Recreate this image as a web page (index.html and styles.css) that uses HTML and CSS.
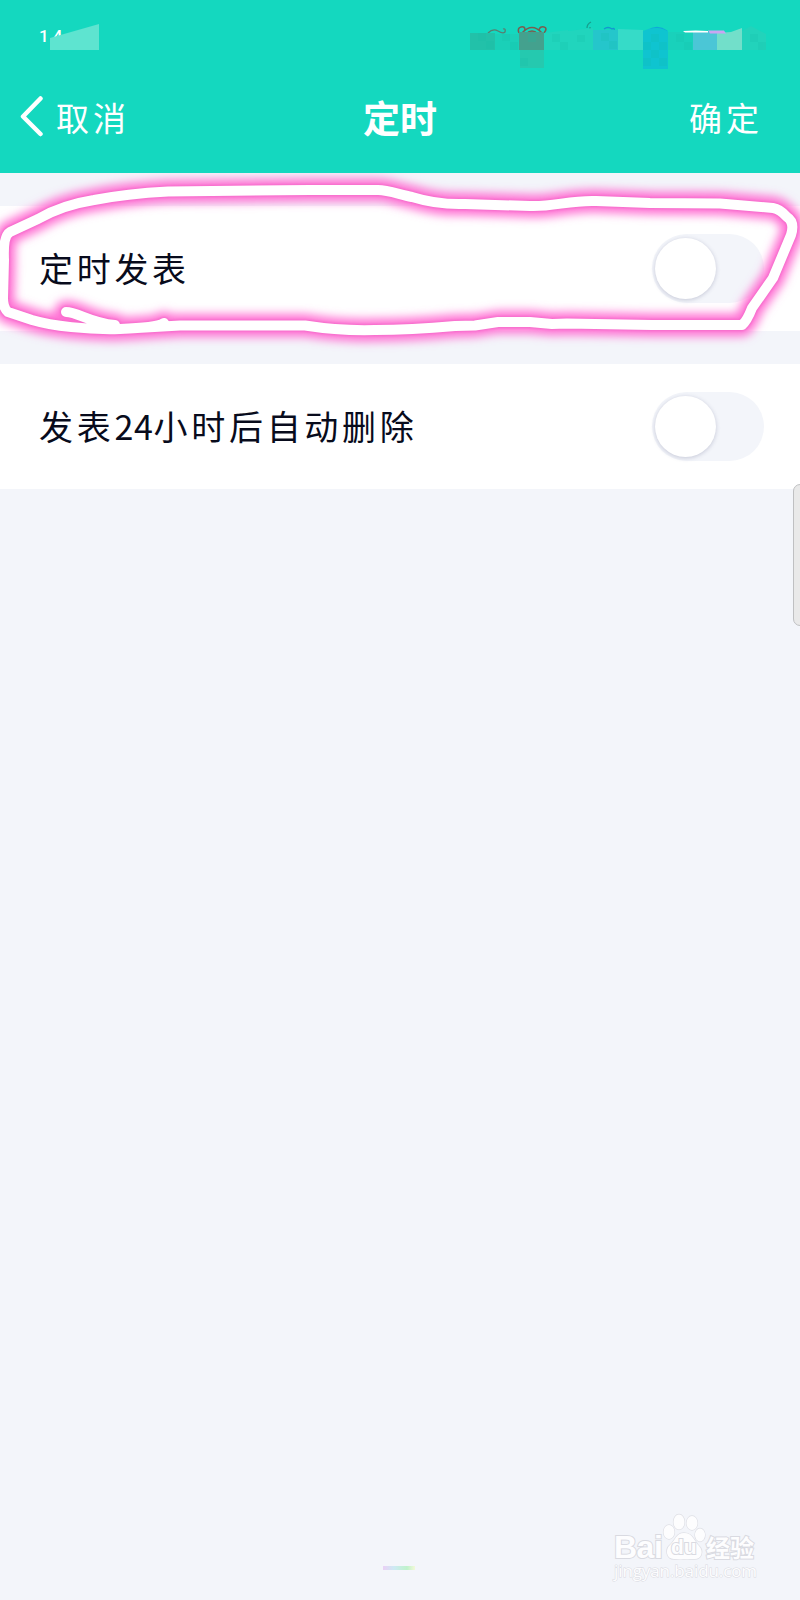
FILE: index.html
```html
<!DOCTYPE html>
<html lang="zh-CN">

<head>
  <meta charset="UTF-8" />
  <meta name="viewport" content="width=device-width, initial-scale=1" />
  <title>定时</title>
  <link rel="stylesheet" href="styles.css">
</head>

<body>

  <header class="header">
    <div class="status-bar">
      <span class="clock">14</span>
      <!-- Mosaic over the clock and the status icons -->
      <svg class="mosaic" width="800" height="74" viewBox="0 0 800 74">
        <path d="M50 38L99 24V50H50z" fill="#5ee4d0" />
        <g fill="none" stroke-width="1.3">
          <path d="M488 33q5-5 10-2t7 1q1-4-2-3" stroke="#587e70" />
          <g stroke="#785f50" stroke-width="1.6">
            <path d="M519 33q-2-5 2-6t4 3M539 30q1-4 5-3t0 6" />
            <path d="M522 33q10-11 20 0M526 34q6-6 12 0" />
          </g>
          <path d="M587 28q0-4 4-6M590 27v2" stroke="#179e8d" />
          <path d="M604 29q4-3 8 0q3-2 2 2" stroke="#1497cf" />
          <path d="M647 31q10-7 20 0" stroke="#0fa9d8" />
        </g>
        <path d="M470 33h25v17h-25z" fill="#22c1a9" />
        <path d="M495 34h24v16h-24z" fill="#1ad0b8" />
        <path d="M519 32h25v18h-25z" fill="#44a18e" />
        <path d="M520 50h24v18h-24z" fill="#25c9af" />
        <path d="M544 33l24-3v20h-24zM568 31l25-3v22h-25z" fill="#21d5bd" />
        <path d="M593 30h25v20h-25z" fill="#25c6cb" />
        <path d="M618 29l25 1v20h-25z" fill="#36dbc8" />
        <path d="M643 31q12-6 25 0v38h-25z" fill="#0fc4d0" />
        <path d="M668 32h25v18h-25z" fill="#19d1bb" />
        <path d="M693 32h24v18h-24z" fill="#4bc6d6" />
        <path d="M717 33l14-1 11-4v22h-25z" fill="#72dfca" />
        <path d="M742 31l9-5 15 8v16h-24z" fill="#22d3bb" />
        <g fill="#14bda7" opacity=".18">
          <path d="M478 33h8v8h-8zM486 41h8v8h-8zM502 34h8v7h-8zM510 42h8v8h-8zM552 34h8v8h-8zM560 42h8v8h-8zM577 35h8v7h-8zM601 33h8v8h-8zM609 41h8v8h-8zM676 34h8v8h-8zM684 42h8v8h-8zM750 34h8v8h-8zM758 42h8v8h-8z" />
          <path d="M651 34h8v8h-8zM643 42h8v8h-8zM659 42h8v8h-8zM651 50h8v8h-8zM643 58h8v8h-8zM659 58h8v8h-8zM528 34h8v8h-8zM520 58h8v8h-8z" />
        </g>
        <path d="M683 31q13-1 25 0v1.600h-23z" fill="#fff" />
        <path d="M708 30.500h16l2 3h-16z" fill="#c9a5f2" />
      </svg>
    </div>
    <nav class="nav-bar">
      <a class="back">
        <svg width="24" height="42" viewBox="0 0 24 42" fill="none" stroke="#fff" stroke-width="4.500" stroke-linecap="round" stroke-linejoin="round">
          <path d="M20.500 2.500L3 20.500L20.500 38" />
        </svg>
        <span>取消</span>
      </a>
      <h1>定时</h1>
      <a class="confirm">确定</a>
    </nav>
  </header>

  <main>
    <div class="row">
      <span class="label">定时发表</span>
      <span class="toggle"></span>
    </div>
    <div class="row">
      <span class="label">发表<span class="digits">24</span>小时后自动删除</span>
      <span class="toggle"></span>
    </div>
  </main>

  <!-- Hand drawn highlight around the first row -->
  <svg class="highlight" width="800" height="187" viewBox="0 173 800 187">
    <defs>
      <filter id="glow" filterUnits="userSpaceOnUse" x="-40" y="140" width="880" height="240">
        <feGaussianBlur stdDeviation="5" />
      </filter>
      <filter id="edge" filterUnits="userSpaceOnUse" x="-40" y="140" width="880" height="240">
        <feGaussianBlur stdDeviation="1" />
      </filter>
      <path id="loop" d="M66 312C78 312 90 323 115 325M164 323C158 327 145 328 120 329C88 330 52 326 32 320L8 312Q3 308 3 298L4 260Q3 236 10 232L38 219Q62 205 94 200C120 195 140 193 168 191.500L310 190H378C388 190 398 194 412 197Q438 205 465 204L530 206C553 207 570 200 596 201L650 203L720 203.500L773 208Q780 209 787 217Q795 222 791 235L773 278L752 308Q747 321 742 325H652L567 323.500L552 324L530 322H498L475 325.500L455 326Q410 330 375 330Q340 331 305 325.500H180L120 329" />
    </defs>
    <g fill="none" stroke-linecap="round" stroke-linejoin="round">
      <use href="#loop" stroke="#ff72d4" stroke-width="23" filter="url(#glow)" />
      <use href="#loop" stroke="#f56bcb" stroke-width="12" filter="url(#edge)" />
      <use href="#loop" stroke="#fff" stroke-width="10" />
    </g>
  </svg>

  <div class="side-handle"></div>
  <div class="home-line"></div>

  <div class="watermark">
    <div class="brand">
      <span class="bai">Bai</span>
      <span class="paw">
        <svg width="44" height="48" viewBox="0 0 44 48" fill="#fdfdfe" stroke="#dedfe5" stroke-width="1.300">
          <ellipse cx="7" cy="19" rx="5.500" ry="7" />
          <ellipse cx="17" cy="9" rx="5.500" ry="7.500" />
          <ellipse cx="30" cy="10" rx="5.500" ry="7" />
          <ellipse cx="38" cy="22" rx="5" ry="6.500" />
          <path d="M22 20C14 20 13 28 8 32C3 36 4 46 12 46C18 47 26 46 31 46C40 47 42 38 37 33C32 28 31 20 22 20z" />
        </svg>
        <span class="du">du</span>
      </span>
      <span class="jingyan">经验</span>
    </div>
    <div class="url">jingyan.baidu.com</div>
  </div>

</body>

</html>
```

FILE: styles.css
```css
* {
  margin: 0;
  padding: 0;
  box-sizing: border-box;
}

body {
  position: relative;
  height: 1600px;
  overflow: hidden;
  background-color: #f3f5fa;
  font-family: "Noto Sans CJK SC", sans-serif;
  color: #080b1c;
}

.header {
  height: 173px;
  background-color: #14d8bf;
  color: #fff;
}

.status-bar {
  position: relative;
  height: 74px;
  padding: 28px 0 0 39px;
}

.clock {
  display: block;
  font-family: Roboto, sans-serif;
  font-size: 17px;
  font-weight: 500;
  line-height: 17px;
  letter-spacing: 4px;
}

.mosaic {
  position: absolute;
  left: 0;
  top: 0;
}

.nav-bar {
  display: grid;
  grid-template-columns: 1fr auto 1fr;
  align-items: center;
  height: 86px;
  padding: 0 37px 0 20px;
}

.back {
  display: flex;
  align-items: center;
  gap: 12px;
}

.back span,
.confirm {
  font-size: 33px;
  font-weight: 400;
  letter-spacing: 4px;
}

.confirm {
  text-align: right;
}

/* side paddings are uneven, keep the title in the middle of the bar */
h1 {
  margin-left: 17px;
  font-size: 37px;
  font-weight: 700;
}

.row {
  display: flex;
  justify-content: space-between;
  align-items: center;
  height: 125px;
  margin-top: 33px;
  padding: 0 36px 0 39px;
  background-color: #fff;
}

.label {
  padding-bottom: 3px;
  font-size: 34px;
  font-weight: 400;
  letter-spacing: 3.700px;
}

.digits {
  letter-spacing: 0.700px;
}

.toggle {
  width: 112px;
  height: 69px;
  padding: 4px 3px;
  border-radius: 35px;
  background-color: #f3f5fa;
}

.toggle::before {
  content: "";
  display: block;
  width: 61px;
  height: 61px;
  border-radius: 50%;
  background-color: #fff;
  box-shadow: 0 1px 4px rgba(60, 65, 110, 0.25);
}

.highlight {
  position: absolute;
  left: 0;
  top: 173px;
}

.side-handle {
  position: absolute;
  left: 793px;
  top: 484px;
  width: 14px;
  height: 142px;
  border: 1px solid #bfc0c2;
  border-radius: 8px;
  background-color: #e9e9e9;
}

.home-line {
  position: absolute;
  left: 383px;
  top: 1566px;
  width: 32px;
  height: 4px;
  background: linear-gradient(90deg, #ead0f5, #cdeaf3 35%, #bff2cb 75%, #f3f8d8);
}

.watermark {
  position: absolute;
  left: 614px;
  top: 1513px;
  color: #fdfdfe;
  -webkit-text-stroke: 2px #d9dae1;
  paint-order: stroke fill;
}

.brand {
  display: flex;
  align-items: flex-end;
  height: 48px;
}

.bai {
  width: 48px;
  font: bold 32px/27px "Liberation Sans", sans-serif;
  letter-spacing: -0.500px;
}

.paw {
  position: relative;
  width: 44px;
  height: 48px;
}

.du {
  position: absolute;
  left: 9px;
  top: 23px;
  font: bold 21px/22px "Liberation Sans", sans-serif;
}

.jingyan {
  font-size: 24px;
  font-weight: 700;
  line-height: 28px;
}

.url {
  margin-top: 1px;
  font: 17px/18px "Open Sans", sans-serif;
  letter-spacing: -0.100px;
  -webkit-text-stroke-width: 1px;
}
```
